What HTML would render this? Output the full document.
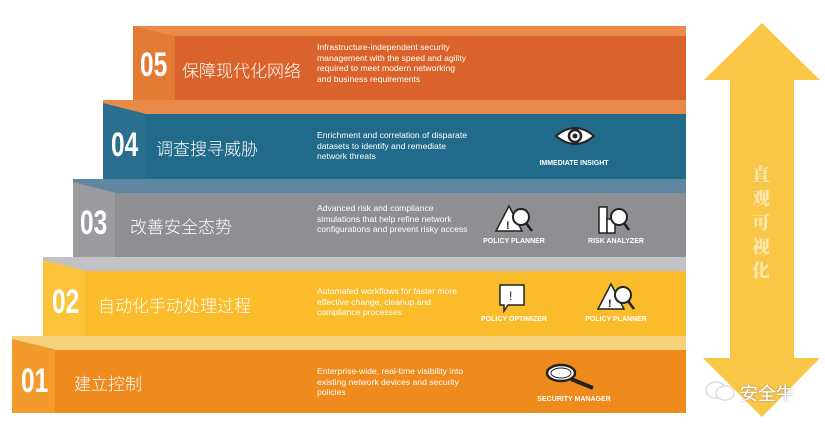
<!DOCTYPE html>
<html><head><meta charset="utf-8"><style>
*{margin:0;padding:0}
body{width:825px;height:428px;background:#fff;position:relative;overflow:hidden;font-family:"Liberation Sans","Noto Sans CJK SC",sans-serif}
.a{position:absolute}
.num{position:absolute;color:#fff;font-size:34px;font-weight:bold;font-family:"Liberation Sans Narrow","Liberation Sans",sans-serif;transform:scaleX(.72);transform-origin:left}
.cn{position:absolute;color:#fff;font-size:17px;font-family:"Noto Sans CJK SC",sans-serif;font-weight:300}
.d{position:absolute;color:#fff;font-size:8.6px;line-height:10.5px;left:317px;width:152px}
.lb{position:absolute;color:#fff;font-size:7px;font-weight:bold;text-align:center;width:100px}
</style></head><body>
<!-- tier 05 -->
<div class="a" style="left:133px;top:26px;width:553px;height:11px;background:#ec8a49"></div>
<div class="a" style="left:133px;top:26px;width:42px;height:74px;background:#e47b35;clip-path:polygon(0 0,100% 14%,100% 100%,0 100%)"></div>
<div class="a" style="left:175px;top:36px;width:511px;height:64px;background:#d9632b"></div>
<div class="num" style="left:140px;top:46px">05</div>
<div class="cn" style="left:182px;top:57px">保障现代化网络</div>
<div class="d" style="top:42px">Infrastructure-independent security management with the speed and agility required to meet modern networking and business requirements</div>
<!-- tier 04 -->
<div class="a" style="left:103px;top:100px;width:583px;height:14px;background:#e98a48"></div>
<div class="a" style="left:103px;top:103px;width:42px;height:76px;background:#2b6f8f;clip-path:polygon(0 0,100% 14%,100% 100%,0 100%)"></div>
<div class="a" style="left:145px;top:114px;width:541px;height:65px;background:#216a8a"></div>
<div class="num" style="left:111px;top:126px">04</div>
<div class="cn" style="left:156px;top:135px">调查搜寻威胁</div>
<div class="d" style="top:130px">Enrichment and correlation of disparate datasets to identify and remediate network threats</div>
<svg class="a" style="left:553px;top:124px" width="44" height="24" viewBox="0 0 44 24"><path d="M3 12 Q22 -4 41 12 Q22 28 3 12Z" fill="#fff" stroke="#222" stroke-width="2"/><circle cx="22" cy="12" r="6" fill="none" stroke="#222" stroke-width="2.5"/><circle cx="22" cy="12" r="2.5" fill="#222"/></svg>
<div class="lb" style="left:524px;top:160px">IMMEDIATE INSIGHT</div>
<!-- tier 03 -->
<div class="a" style="left:73px;top:179px;width:613px;height:14px;background:#5f87a1"></div>
<div class="a" style="left:73px;top:182px;width:42px;height:75px;background:#9c9ba0;clip-path:polygon(0 0,100% 14%,100% 100%,0 100%)"></div>
<div class="a" style="left:115px;top:193px;width:571px;height:64px;background:#8f8e93"></div>
<div class="num" style="left:80px;top:204px">03</div>
<div class="cn" style="left:130px;top:213px">改善安全态势</div>
<div class="d" style="top:203px">Advanced risk and compliance simulations that help refine network configurations and prevent risky access</div>
<svg class="a" style="left:495px;top:204px" width="40" height="30" viewBox="0 0 40 30"><path d="M14 2 L27 27 L1 27Z" fill="#fff" stroke="#222" stroke-width="1.5"/><circle cx="26" cy="13" r="8" fill="#fff" stroke="#222" stroke-width="2"/><path d="M31 19 L37 27" stroke="#222" stroke-width="2.5"/><text x="11" y="25" font-size="11" font-weight="bold" fill="#222">!</text></svg>
<div class="lb" style="left:464px;top:238px">POLICY PLANNER</div>
<svg class="a" style="left:597px;top:205px" width="36" height="30" viewBox="0 0 36 30"><rect x="2" y="2" width="8" height="26" fill="#fff" stroke="#222" stroke-width="1.5"/><rect x="10" y="14" width="8" height="14" fill="#fff" stroke="#222" stroke-width="1.5"/><circle cx="22" cy="12" r="8" fill="#fff" stroke="#222" stroke-width="2"/><path d="M27 18 L32 25" stroke="#222" stroke-width="2.5"/></svg>
<div class="lb" style="left:566px;top:238px">RISK ANALYZER</div>
<!-- tier 02 -->
<div class="a" style="left:43px;top:257px;width:643px;height:14px;background:#c2c2c6"></div>
<div class="a" style="left:43px;top:260px;width:42px;height:76px;background:#fbc43a;clip-path:polygon(0 0,100% 14%,100% 100%,0 100%)"></div>
<div class="a" style="left:85px;top:271px;width:601px;height:65px;background:#fabc2b"></div>
<div class="num" style="left:52px;top:283px">02</div>
<div class="cn" style="left:98px;top:292px">自动化手动处理过程</div>
<div class="d" style="top:286px">Automated workflows for faster more effective change, cleanup and compliance processes</div>
<svg class="a" style="left:498px;top:283px" width="28" height="30" viewBox="0 0 28 30"><path d="M2 2 H26 V22 H10 L6 28 V22 H2Z" fill="#fff" stroke="#222" stroke-width="1.5"/><text x="11" y="17" font-size="12" fill="#222">!</text></svg>
<div class="lb" style="left:464px;top:316px">POLICY OPTIMIZER</div>
<svg class="a" style="left:597px;top:282px" width="40" height="30" viewBox="0 0 40 30"><path d="M14 2 L27 27 L1 27Z" fill="#fff" stroke="#222" stroke-width="1.5"/><circle cx="26" cy="13" r="8" fill="#fff" stroke="#222" stroke-width="2"/><path d="M31 19 L37 27" stroke="#222" stroke-width="2.5"/><text x="11" y="25" font-size="11" font-weight="bold" fill="#222">!</text></svg>
<div class="lb" style="left:566px;top:316px">POLICY PLANNER</div>
<!-- tier 01 -->
<div class="a" style="left:12px;top:336px;width:674px;height:14px;background:#f7d27c"></div>
<div class="a" style="left:12px;top:339px;width:43px;height:74px;background:#f39a2c;clip-path:polygon(0 0,100% 14%,100% 100%,0 100%)"></div>
<div class="a" style="left:55px;top:350px;width:631px;height:63px;background:#ef8a1d"></div>
<div class="num" style="left:21px;top:362px">01</div>
<div class="cn" style="left:74px;top:370px">建立控制</div>
<div class="d" style="top:366px">Enterprise-wide, real-time visibility into existing network devices and security policies</div>
<svg class="a" style="left:545px;top:362px" width="52" height="30" viewBox="0 0 52 30"><ellipse cx="16" cy="11" rx="14" ry="8" fill="#fff" stroke="#222" stroke-width="2.5"/><ellipse cx="16" cy="11" rx="10" ry="5" fill="none" stroke="#222" stroke-width="1"/><path d="M26 17 L48 26" stroke="#222" stroke-width="4"/></svg>
<div class="lb" style="left:524px;top:396px">SECURITY MANAGER</div>
<!-- arrow -->
<svg class="a" style="left:0;top:0" width="825" height="428"><path d="M762 23 L820 80 L794 80 L794 358 L820 358 L762 417 L703 358 L730 358 L730 80 L704 80Z" fill="#fac646"/></svg>
<div class="a" style="left:752px;top:162px;width:20px;font-size:18px;line-height:24px;color:#fbe7b0;font-family:'Noto Serif CJK SC',serif;font-weight:900">直观可视化</div>
<svg class="a" style="left:703px;top:380px" width="34" height="22" viewBox="0 0 34 22"><ellipse cx="13" cy="10" rx="10" ry="8" fill="none" stroke="#ddd" stroke-width="1.5"/><ellipse cx="22" cy="13" rx="9" ry="7" fill="#fff" stroke="#ddd" stroke-width="1.5"/></svg>
<div class="a" style="left:740px;top:380px;font-size:18px;color:#fff;text-shadow:0 0 2px #888">安全牛</div>
</body></html>
